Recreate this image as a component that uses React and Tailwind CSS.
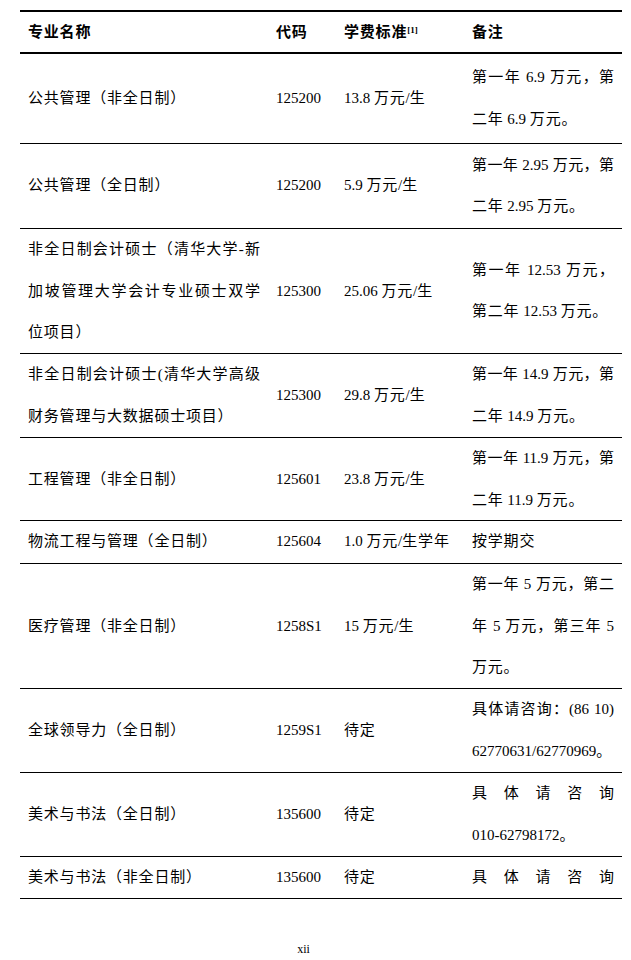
const CJK = /([\u3000-\u303f\u4e00-\u9fff\uff00-\uffef]+)/;

const rows = [
  {
    h: "h-[90px]",
    name: [{ t: "公共管理（非全日制）" }],
    code: "125200",
    fee: "13.8 万元/生",
    note: [{ t: "第一年 6.9 万元，第", j: true }, { t: "二年 6.9 万元。" }],
  },
  {
    h: "h-[85px]",
    name: [{ t: "公共管理（全日制）" }],
    code: "125200",
    fee: "5.9 万元/生",
    note: [{ t: "第一年 2.95 万元，第", j: true }, { t: "二年 2.95 万元。" }],
  },
  {
    h: "h-[125px]",
    name: [
      { t: "非全日制会计硕士（清华大学-新", j: true },
      { t: "加坡管理大学会计专业硕士双学", j: true },
      { t: "位项目）" },
    ],
    code: "125300",
    fee: "25.06 万元/生",
    note: [{ t: "第一年 12.53 万元，", j: true }, { t: "第二年 12.53 万元。" }],
  },
  {
    h: "h-[84px]",
    name: [
      { t: "非全日制会计硕士(清华大学高级", j: true },
      { t: "财务管理与大数据硕士项目）" },
    ],
    code: "125300",
    fee: "29.8 万元/生",
    note: [{ t: "第一年 14.9 万元，第", j: true }, { t: "二年 14.9 万元。" }],
  },
  {
    h: "h-[83px]",
    name: [{ t: "工程管理（非全日制）" }],
    code: "125601",
    fee: "23.8 万元/生",
    note: [{ t: "第一年 11.9 万元，第", j: true }, { t: "二年 11.9 万元。" }],
  },
  {
    h: "h-[43px]",
    name: [{ t: "物流工程与管理（全日制）" }],
    code: "125604",
    fee: "1.0 万元/生学年",
    note: [{ t: "按学期交" }],
  },
  {
    h: "h-[125px]",
    name: [{ t: "医疗管理（非全日制）" }],
    code: "1258S1",
    fee: "15 万元/生",
    note: [
      { t: "第一年 5 万元，第二", j: true },
      { t: "年 5 万元，第三年 5", j: true },
      { t: "万元。" },
    ],
  },
  {
    h: "h-[84px]",
    name: [{ t: "全球领导力（全日制）" }],
    code: "1259S1",
    fee: "待定",
    note: [{ t: "具体请咨询：(86 10)", j: true }, { t: "62770631/62770969。" }],
  },
  {
    h: "h-[84px]",
    name: [{ t: "美术与书法（全日制）" }],
    code: "135600",
    fee: "待定",
    note: [{ t: "具体请咨询", j: true }, { t: "010-62798172。" }],
  },
  {
    h: "h-[42px]",
    name: [{ t: "美术与书法（非全日制）" }],
    code: "135600",
    fee: "待定",
    note: [{ t: "具体请咨询", j: true }],
  },
];

// CJK runs get a little tracking so unjustified lines match the original pitch
function Run({ text }) {
  return text.split(CJK).map((part, i) =>
    CJK.test(part) ? (
      <span key={i} className="tracking-[0.8px]">
        {part}
      </span>
    ) : (
      part
    )
  );
}

function Lines({ lines }) {
  return lines.map((line, i) =>
    line.j ? (
      <div key={i} className="text-justify [text-align-last:justify]">
        {line.t}
      </div>
    ) : (
      <div key={i}>
        <Run text={line.t} />
      </div>
    )
  );
}

const grid = "grid grid-cols-[248px_68px_128px_158px]";
const cell = "flex flex-col justify-center px-2";

export default function App() {
  return (
    <div className="min-h-[960px] bg-white pt-[10px] font-['Liberation_Serif','Noto_Sans_CJK_SC',serif] text-[15px] leading-[41.5px] text-black">
      <div className="ml-[20px] w-[602px] border-t-2 border-black">
        <div className={`${grid} h-[42px] border-b-2 border-black font-bold`}>
          <div className={cell}>
            <Run text="专业名称" />
          </div>
          <div className={cell}>
            <Run text="代码" />
          </div>
          <div className={cell}>
            <div>
              <Run text="学费标准" />
              <sup className="text-[9px] font-bold">[1]</sup>
            </div>
          </div>
          <div className={cell}>
            <Run text="备注" />
          </div>
        </div>

        {rows.map((row, i) => (
          <div key={i} className={`${grid} ${row.h} border-b border-black`}>
            <div className={cell}>
              <Lines lines={row.name} />
            </div>
            <div className={cell}>{row.code}</div>
            <div className={`${cell} whitespace-nowrap`}>
              <div>
                <Run text={row.fee} />
              </div>
            </div>
            <div className={cell}>
              <Lines lines={row.note} />
            </div>
          </div>
        ))}
      </div>

      <div className="mt-[44px] w-[607px] text-center text-[12px] leading-[12px]">xii</div>
    </div>
  );
}
